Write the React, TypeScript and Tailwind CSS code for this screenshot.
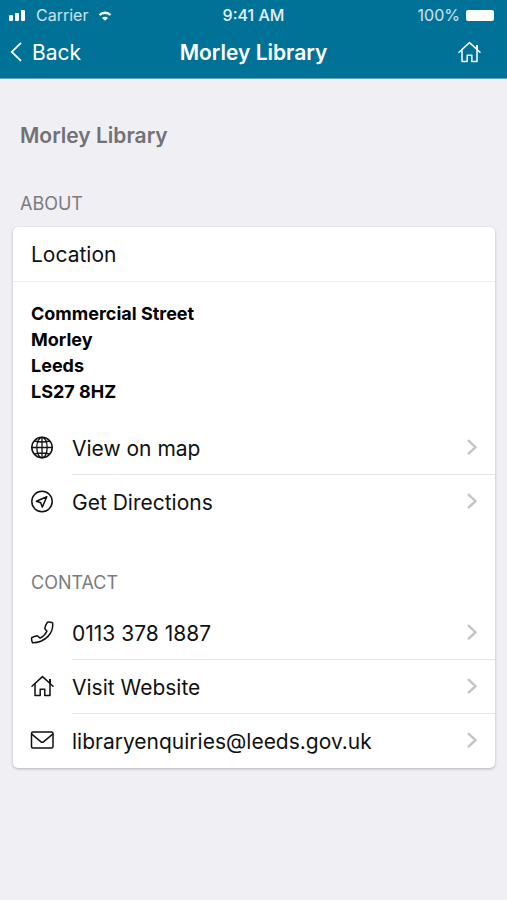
import type { ReactNode } from 'react'

const iconProps = {
  viewBox: '0 0 24 24',
  fill: 'none',
  stroke: 'currentColor',
  strokeWidth: 1.5,
  strokeLinecap: 'round' as const,
  strokeLinejoin: 'round' as const,
  className: 'size-6 shrink-0',
  'aria-hidden': true,
}

function HomeIcon() {
  return (
    <svg {...iconProps}>
      <path d="M2 11.200 12.500 1.600 23 11.200" />
      <path d="M20 4v4" strokeWidth="2" strokeLinecap="butt" />
      <path d="M5 8.700v11.800h5.200v-6.300h4.600v6.300H20V8.700" />
    </svg>
  )
}

function GlobeIcon() {
  return (
    <svg {...iconProps} strokeWidth="1.300">
      <circle cx="12" cy="11.500" r="10.200" strokeWidth="1.500" />
      <ellipse cx="12" cy="11.500" rx="5.200" ry="10.200" />
      <path d="M12 1.300v20.400M1.800 11.500h20.400M4.500 5c4.600 1.200 10.400 1.200 15 0M4.500 18c4.600-1.200 10.400-1.200 15 0" />
    </svg>
  )
}

function NavigateIcon() {
  return (
    <svg {...iconProps}>
      <circle cx="12" cy="11.500" r="10.200" />
      <path d="M16.800 6.800 6.400 11.200l4.300 1.600 1.600 4.300z" />
    </svg>
  )
}

function PhoneIcon() {
  return (
    <svg {...iconProps}>
      <path d="M17.400 1.200c1.800-.3 3.800 0 5.200.7.500 4.600-1 9.900-4.600 13.500S8.500 21.800 2.600 21.800c-.9-1.500-1.200-3.400-.9-5.100 1.800-1.100 3.600-1.700 5.700-2l2.600 2.400c2.900-1.300 5.500-3.900 6.900-6.900l-2.100-2.700c.4-2.300 1.200-4.400 2.600-6.300z" />
    </svg>
  )
}

function MailIcon() {
  return (
    <svg {...iconProps}>
      <rect x="1.500" y="3" width="21.500" height="16" rx="1.500" />
      <path d="m1.800 5.200 9.200 7.600q1.250 1 2.500 0l9.200-7.600" />
    </svg>
  )
}

function Chevron() {
  return (
    <svg viewBox="0 0 12 18" fill="none" stroke="#c5c5c9" strokeWidth="2.500" className="h-[18px] w-3 shrink-0" aria-hidden="true">
      <path d="m2 1.200 7.500 7L2 15.200" />
    </svg>
  )
}

interface RowProps {
  href: string
  icon: ReactNode
  label: string
  divider?: boolean
}

function Row({ href, icon, label, divider }: RowProps) {
  return (
    <li>
      <a href={href} className="flex h-[54px] items-stretch gap-[18px] pl-[17px]">
        <span className="flex items-center">{icon}</span>
        <span className={`flex flex-1 items-center justify-between pr-[17px] ${divider ? 'border-b border-[#e4e4e6]' : ''}`}>
          <span className="pt-0.5 text-[21px] leading-7">{label}</span>
          <Chevron />
        </span>
      </a>
    </li>
  )
}

function StatusBar() {
  return (
    <div className="grid grid-cols-3 items-center px-2 pt-[3px] text-base leading-6">
      <div className="flex items-center gap-2.5 text-white/80">
        <svg viewBox="0 0 18 12" fill="#fff" className="h-3 w-[18px]" aria-hidden="true">
          <rect x="1" y="6" width="4" height="6" rx="1" />
          <rect x="7" y="4" width="4" height="8" rx="1" />
          <rect x="13" y="1" width="4" height="11" rx="1" />
        </svg>
        <span>Carrier</span>
        <svg viewBox="0 0 14 12" fill="none" stroke="#fff" className="h-3 w-3.5" aria-hidden="true">
          <path d="M1.500 6c3-3 8-3 11 0" strokeWidth="2.400" />
          <path d="M4 9c1.600-1.600 4.400-1.600 6 0L7 11.800z" fill="#fff" stroke="none" />
        </svg>
      </div>
      <span className="text-center font-medium text-white/90">9:41 AM</span>
      <div className="flex items-center justify-end gap-1.5 pr-[5px] text-white/80">
        <span>100%</span>
        <span className="h-[11px] w-7 rounded-[2px] bg-white" />
      </div>
    </div>
  )
}

export default function App() {
  return (
    <div className="min-h-screen bg-[#efeff4] font-['Inter','Liberation_Sans',sans-serif] text-[#111]">
      <header className="border-b border-[#5fa5bf] bg-[#007298] text-white">
        <StatusBar />
        <nav className="grid h-[51px] grid-cols-[1fr_auto_1fr] items-center px-2.5 pt-px">
          <button type="button" className="flex items-center gap-2 justify-self-start text-[21px] leading-7">
            <svg viewBox="0 0 14 22" fill="none" stroke="currentColor" strokeWidth="1.800" className="h-[22px] w-3.5" aria-hidden="true">
              <path d="M11 .900 1.800 9.900 11 18.900" />
            </svg>
            Back
          </button>
          <h1 className="text-[21px] leading-7 font-semibold">Morley Library</h1>
          <button type="button" aria-label="Home" className="mr-4 justify-self-end">
            <HomeIcon />
          </button>
        </nav>
      </header>

      <main className="pt-[43px] pr-3 pb-10 pl-[13px]">
        <h2 className="px-[7px] text-[21px] leading-7 font-semibold text-[#717176]">Morley Library</h2>
        <h3 className="mt-[42px] mb-[11px] px-[7px] text-lg leading-6 text-[#7b7b80]">ABOUT</h3>

        <section className="rounded-[5px] bg-white shadow-[0_1px_3px_rgba(0,0,0,0.25)]">
          <h4 className="border-b border-[#efeff1] px-[18px] pt-3.5 pb-3 text-[21px] leading-7">Location</h4>
          <address className="px-[18px] pt-[19px] pb-4 text-lg leading-[26px] font-bold text-black not-italic">
            Commercial Street
            <br />
            Morley
            <br />
            Leeds
            <br />
            LS27 8HZ
          </address>
          <ul>
            <Row href="#map" icon={<GlobeIcon />} label="View on map" divider />
            <Row href="#directions" icon={<NavigateIcon />} label="Get Directions" />
          </ul>

          <h3 className="mt-[42px] mb-[11px] px-[18px] text-lg leading-6 text-[#7b7b80]">CONTACT</h3>
          <ul>
            <Row href="tel:01133781887" icon={<PhoneIcon />} label="0113 378 1887" divider />
            <Row href="#website" icon={<HomeIcon />} label="Visit Website" divider />
            <Row href="mailto:libraryenquiries@leeds.gov.uk" icon={<MailIcon />} label="libraryenquiries@leeds.gov.uk" />
          </ul>
        </section>
      </main>
    </div>
  )
}
